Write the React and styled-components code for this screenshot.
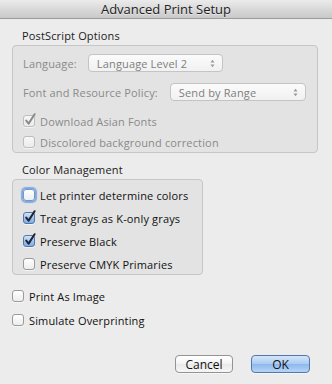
import React from "react";
import styled, { createGlobalStyle, css } from "styled-components";

const GlobalStyle = createGlobalStyle`
  html, body {
    margin: 0;
    padding: 0;
    background: #ececec;
  }
  body {
    font-family: "Open Sans", "DejaVu Sans", sans-serif;
  }
`;

const Window = styled.div`
  width: 332px;
  height: 384px;
  background: #ececec;
  overflow: hidden;
  display: flex;
  flex-direction: column;
`;

const TitleBar = styled.div`
  height: 18px;
  line-height: 18px;
  text-align: center;
  font-size: 13px;
  color: #222;
  background: linear-gradient(#ebebeb, #d6d6d6 60%, #c9c9c9);
  border-bottom: 1px solid #9c9c9c;
  text-shadow: 0 1px 0 rgba(255, 255, 255, 0.5);
`;

const Body = styled.div`
  padding: 0 22px 0 12px;
  display: flex;
  flex-direction: column;
  font-size: 11px;
  letter-spacing: 0.15px;
  color: #111;
`;

const SectionLabel = styled.div`
  margin: 10px 0 2px 10px;
  line-height: 14px;
  color: #1a1a1a;
`;

const GroupBox = styled.div`
  width: ${(p) => p.$width}px;
  box-sizing: border-box;
  background: #e3e3e3;
  border: 1px solid #c6c6c6;
  border-radius: 4px;
  padding: ${(p) => p.$padTop}px 10px 2px 10px;
  display: flex;
  flex-direction: column;
`;

const FieldRow = styled.div`
  display: flex;
  align-items: center;
  height: 18px;
  margin-top: ${(p) => p.$gap || 0}px;
`;

const FieldLabel = styled.span`
  color: ${(p) => (p.$disabled ? "#8a8a8a" : "#111")};
  margin-right: ${(p) => p.$space}px;
  white-space: nowrap;
`;

const Popup = styled.div`
  width: ${(p) => p.$width}px;
  height: 18px;
  box-sizing: border-box;
  display: flex;
  align-items: center;
  justify-content: space-between;
  padding: 0 7px 0 8px;
  border: 1px solid #c4c4c4;
  border-radius: 4px;
  background: linear-gradient(#fbfbfb, #f1f1f1);
  color: #7e7e7e;
  white-space: nowrap;
`;

const CheckRow = styled.label`
  display: flex;
  align-items: center;
  height: 16px;
  margin-top: ${(p) => p.$gap || 0}px;
  color: ${(p) => (p.$disabled ? "#8a8a8a" : "#111")};
  white-space: nowrap;
`;

const Box = styled.span`
  position: relative;
  width: 12px;
  height: 12px;
  box-sizing: border-box;
  margin-right: 5px;
  border-radius: 3px;
  flex: none;
  border: 1px solid #9b9b9b;
  background: linear-gradient(#ffffff, #ededed);
  box-shadow: 0 1px 0 rgba(255, 255, 255, 0.6);

  ${(p) =>
    p.$checked &&
    css`
      border-color: #5577a6;
      background: linear-gradient(#d5e4f7, #9fc2ee 55%, #7eaee8);
    `}

  ${(p) =>
    p.$disabled &&
    css`
      border-color: #bdbdbd;
      background: linear-gradient(#f7f7f7, #ececec);
    `}

  ${(p) =>
    p.$focused &&
    css`
      border-color: #6d98d0;
      box-shadow: 0 0 1px 2px rgba(100, 150, 220, 0.75);
    `}

  svg {
    position: absolute;
    left: 0;
    top: -3px;
    overflow: visible;
  }
`;

const Checkbox = ({ checked, disabled, focused }) => (
  <Box $checked={checked} $disabled={disabled} $focused={focused}>
    {checked && (
      <svg width="13" height="13" viewBox="0 0 13 13">
        <path
          d="M2.2 7.6 L4.6 10.6 L10.6 1.2"
          fill="none"
          stroke={disabled ? "#8a8a8a" : "#1b2536"}
          strokeWidth="2"
          strokeLinecap="round"
          strokeLinejoin="round"
        />
      </svg>
    )}
  </Box>
);

const Arrows = () => (
  <svg width="5" height="9" viewBox="0 0 5 9">
    <path d="M0.5 3.5 L2.5 0.8 L4.5 3.5 Z" fill="#9a9a9a" />
    <path d="M0.5 5.5 L2.5 8.2 L4.5 5.5 Z" fill="#9a9a9a" />
  </svg>
);

const ButtonBar = styled.div`
  display: flex;
  justify-content: flex-end;
  gap: 18px;
  margin-top: 27px;
`;

const Button = styled.button`
  width: ${(p) => p.$width}px;
  height: 18px;
  padding: 0;
  font-family: inherit;
  font-size: 12px;
  color: #111;
  border-radius: 4px;
  border: 1px solid #949494;
  background: linear-gradient(#ffffff, #f3f3f3 50%, #e9e9e9 51%, #f6f6f6);
  box-shadow: 0 1px 0 rgba(255, 255, 255, 0.5);

  ${(p) =>
    p.$primary &&
    css`
      border-color: #5377a8;
      background: linear-gradient(#d6e6f9, #a9caf1 50%, #8cb8ec 51%, #b5d5f7);
    `}
`;

export default function App() {
  return (
    <>
      <GlobalStyle />
      <Window>
        <TitleBar>Advanced Print Setup</TitleBar>
        <Body>
          <SectionLabel>PostScript Options</SectionLabel>
          <GroupBox $width={306} $padTop={8}>
            <FieldRow>
              <FieldLabel $disabled $space={11}>Language:</FieldLabel>
              <Popup $width={135}>
                Language Level 2
                <Arrows />
              </Popup>
            </FieldRow>
            <FieldRow $gap={11}>
              <FieldLabel $disabled $space={12}>Font and Resource Policy:</FieldLabel>
              <Popup $width={136}>
                Send by Range
                <Arrows />
              </Popup>
            </FieldRow>
            <CheckRow $gap={12} $disabled>
              <Checkbox checked disabled />
              Download Asian Fonts
            </CheckRow>
            <CheckRow $gap={5} $disabled>
              <Checkbox disabled />
              Discolored background correction
            </CheckRow>
          </GroupBox>

          <SectionLabel>Color Management</SectionLabel>
          <GroupBox $width={191} $padTop={7}>
            <CheckRow>
              <Checkbox focused />
              Let printer determine colors
            </CheckRow>
            <CheckRow $gap={7}>
              <Checkbox checked />
              Treat grays as K-only grays
            </CheckRow>
            <CheckRow $gap={7}>
              <Checkbox checked />
              Preserve Black
            </CheckRow>
            <CheckRow $gap={7}>
              <Checkbox />
              Preserve CMYK Primaries
            </CheckRow>
          </GroupBox>

          <CheckRow $gap={13}>
            <Checkbox />
            Print As Image
          </CheckRow>
          <CheckRow $gap={8}>
            <Checkbox />
            Simulate Overprinting
          </CheckRow>

          <ButtonBar>
            <Button $width={58}>Cancel</Button>
            <Button $width={59} $primary>OK</Button>
          </ButtonBar>
        </Body>
      </Window>
    </>
  );
}
